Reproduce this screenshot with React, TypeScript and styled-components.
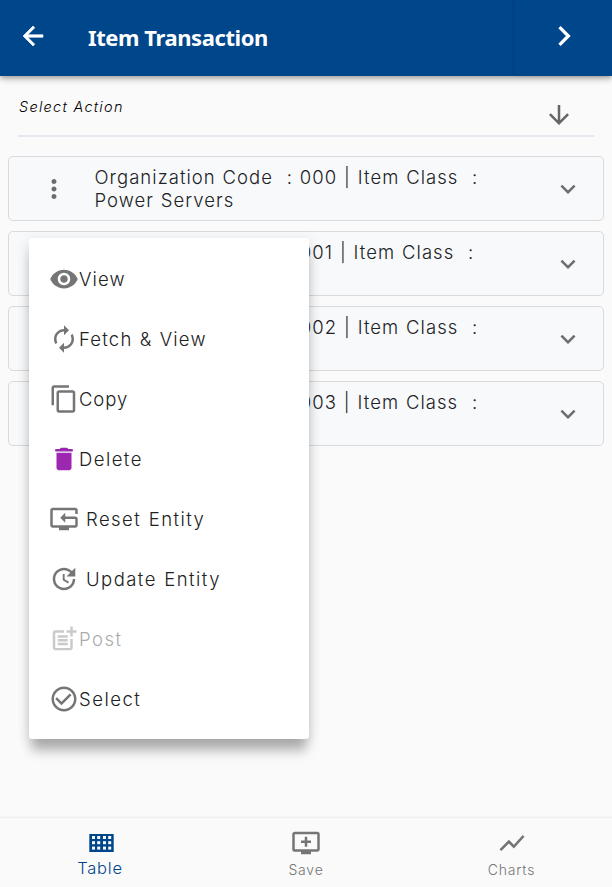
import React from "react";
import styled, { createGlobalStyle } from "styled-components";
import type { IconType } from "react-icons";
import {
  MdAddToQueue,
  MdArrowBack,
  MdArrowDownward,
  MdAutorenew,
  MdContentCopy,
  MdDelete,
  MdExpandMore,
  MdMoreVert,
  MdNavigateNext,
  MdPostAdd,
  MdResetTv,
  MdShowChart,
  MdVisibility,
} from "react-icons/md";

const GlobalStyle = createGlobalStyle`
  *, *::before, *::after { box-sizing: border-box; }
  body { margin: 0; background: #fafafa; }
  button { font: inherit; color: inherit; border: 0; background: none; padding: 0; }
`;

const Screen = styled.div`
  position: relative;
  display: flex;
  flex-direction: column;
  height: 887px;
  overflow: hidden;
  background: #fafafa;
  color: #212121;
  font-family: Inter, "Liberation Sans", sans-serif;
`;

const Header = styled.header`
  display: flex;
  flex: none;
  height: 76px;
  background: #00468b;
  color: #fff;
  box-shadow: 0 2px 4px -1px rgba(0, 0, 0, 0.2), 0 4px 5px rgba(0, 0, 0, 0.14),
    0 1px 10px rgba(0, 0, 0, 0.12);
`;

const BackButton = styled.button`
  display: flex;
  width: 88px;
  height: 72px;
  padding-left: 18px;
  align-items: center;
`;

const BackIcon = styled(MdArrowBack)`
  path:not([fill="none"]) {
    stroke: currentColor;
    stroke-width: 0.5px;
    stroke-linejoin: round;
  }
  path[fill="none"] { stroke: none; }
`;

const Title = styled.h1`
  flex: 1;
  margin: 0;
  font: 700 22px/74px "Noto Sans", "Open Sans", sans-serif;
  letter-spacing: -0.42px;
`;

const NextButton = styled.button`
  display: flex;
  width: 98px;
  height: 76px;
  padding: 0 0 4px 30px;
  align-items: center;
  border-radius: 4px;
  box-shadow: -1px 0 2px rgba(0, 0, 0, 0.14);
`;

const ActionBar = styled.div`
  display: flex;
  flex: none;
  justify-content: space-between;
  height: 61px;
  margin: 0 18px;
  padding: 0 20px 0 1px;
  border-bottom: 2px solid #e4e9ef;
`;

const ActionLabel = styled.span`
  padding-top: 21px;
  font-size: 14.5px;
  line-height: 20px;
  font-style: italic;
  font-weight: 300;
  letter-spacing: 1.27px;
  color: #000;
`;

const SortIcon = styled(MdArrowDownward)`
  margin-top: 24px;
  color: #666;
`;

const List = styled.main`
  display: flex;
  flex: 1;
  flex-direction: column;
  gap: 10px;
  padding: 19px 8px 0;
`;

const Card = styled.article`
  display: flex;
  align-items: center;
  height: 65px;
  padding: 0 20px 0 30px;
  border: 1px solid #d8dadd;
  border-radius: 5px;
  background: #f8f9fb;
  color: #6b6d70;
`;

const CardText = styled.p`
  flex: 1;
  align-self: flex-start;
  margin: 9px 0 0 25.5px;
  font-size: 18.5px;
  line-height: 23px;
  font-weight: 300;
  letter-spacing: 1.04px;
  word-spacing: 0.6px;
  white-space: pre-line;
  color: #212225;

  span { white-space: pre; }
`;

const Menu = styled.ul`
  position: absolute;
  top: 238px;
  left: 29px;
  width: 280px;
  height: 501px;
  margin: 0;
  padding: 11px 20px;
  list-style: none;
  background: #fff;
  border-radius: 3px;
  box-shadow: 0 15px 11px -3px rgba(0, 0, 0, 0.25), 0 4px 14px rgba(0, 0, 0, 0.14);
`;

const MenuItem = styled.li<{ $disabled?: boolean }>`
  display: flex;
  align-items: center;
  height: 60px;
  opacity: ${(p) => (p.$disabled ? 0.38 : 1)};
`;

const MenuIcon = styled.span<{ $color?: string }>`
  display: flex;
  color: ${(p) => p.$color ?? "#757575"};
`;

const MenuLabel = styled.span<{ $spacing: number; $indent?: boolean }>`
  padding-left: ${(p) => (p.$indent ? 7 : 0)}px;
  font-size: 18.5px;
  line-height: 30px;
  font-weight: 300;
  letter-spacing: ${(p) => p.$spacing}px;
  word-spacing: 0.8px;
  white-space: nowrap;
`;

const TabBar = styled.nav`
  display: grid;
  grid-template-columns: 200px 212px 199px;
  flex: none;
  height: 70px;
  border-top: 1px solid #f0f0f0;
  box-shadow: 0 -1px 1px rgba(0, 0, 0, 0.015);
`;

const Tab = styled.button<{ $active?: boolean }>`
  display: flex;
  flex-direction: column;
  align-items: center;
  padding-top: 10px;
  color: ${(p) => (p.$active ? "#00468b" : "#757575")};
`;

const TabLabel = styled.span<{ $active?: boolean }>`
  margin-top: ${(p) => (p.$active ? 0 : 2)}px;
  font-size: ${(p) => (p.$active ? 16.5 : 14)}px;
  line-height: 20px;
  font-weight: 300;
  letter-spacing: 0.8px;
`;

const iconProps = { viewBox: "0 0 24 24", width: 30, height: 30, fill: "currentColor" };

const UpdateIcon = () => (
  <svg {...iconProps}>
    <path d="M11 8v5l4.25 2.52.77-1.28-3.52-2.09V8zm10 2V3l-2.64 2.64C16.74 4.01 14.49 3 12 3c-4.97 0-9 4.03-9 9s4.03 9 9 9 9-4.03 9-9h-2c0 3.86-3.14 7-7 7s-7-3.14-7-7 3.14-7 7-7c1.93 0 3.68.79 4.95 2.05L14 10z" />
  </svg>
);

const SelectIcon = () => (
  <svg {...iconProps}>
    <path d="M16.59 7.58 10 14.17l-3.59-3.58L5 12l5 5 8-8zM12 2C6.48 2 2 6.48 2 12s4.48 10 10 10 10-4.48 10-10S17.52 2 12 2m0 18c-4.42 0-8-3.58-8-8s3.58-8 8-8 8 3.58 8 8-3.58 8-8 8" />
  </svg>
);

const TableIcon = () => (
  <svg width="30" height="30" viewBox="0 0 30 30">
    <path fill="currentColor" d="M4.3 6h24.4v18H4.3z" />
    {[8, 13.2, 18.6].map((y) =>
      [7, 12.2, 18, 23.2].map((x) => (
        <rect key={`${x}-${y}`} x={x} y={y} width="3" height="3" fill="#fafafa" />
      )),
    )}
  </svg>
);

interface Action {
  label: string;
  icon: IconType | (() => React.JSX.Element);
  spacing: number;
  color?: string;
  indent?: boolean;
  disabled?: boolean;
}

const actions: Action[] = [
  { label: "View", icon: MdVisibility, spacing: 1.1 },
  { label: "Fetch & View", icon: MdAutorenew, spacing: 1.2 },
  { label: "Copy", icon: MdContentCopy, spacing: 0.9 },
  { label: "Delete", icon: MdDelete, spacing: 1.45, color: "#9c27b0" },
  { label: "Reset Entity", icon: MdResetTv, spacing: 1.45, indent: true },
  { label: "Update Entity", icon: UpdateIcon, spacing: 1.45, indent: true },
  { label: "Post", icon: MdPostAdd, spacing: 1.5, disabled: true },
  { label: "Select", icon: SelectIcon, spacing: 1.5 },
];

const codes = ["000", "001", "002", "003"];

export default function App() {
  return (
    <>
      <GlobalStyle />
      <Screen>
        <Header>
          <BackButton aria-label="Back">
            <BackIcon size={30} />
          </BackButton>
          <Title>Item Transaction</Title>
          <NextButton aria-label="Next">
            <MdNavigateNext size={40} />
          </NextButton>
        </Header>
        <ActionBar>
          <ActionLabel>Select Action</ActionLabel>
          <SortIcon size={30} />
        </ActionBar>
        <List>
          {codes.map((code) => (
            <Card key={code}>
              <MdMoreVert size={30} />
              <CardText>
                <span>{`Organization Code  : ${code} | Item Class  :`}</span>
                {"\nPower Servers"}
              </CardText>
              <MdExpandMore size={30} />
            </Card>
          ))}
        </List>
        <TabBar>
          <Tab $active>
            <TableIcon />
            <TabLabel $active>Table</TabLabel>
          </Tab>
          <Tab>
            <MdAddToQueue size={30} />
            <TabLabel>Save</TabLabel>
          </Tab>
          <Tab>
            <MdShowChart size={30} />
            <TabLabel>Charts</TabLabel>
          </Tab>
        </TabBar>
        <Menu>
          {actions.map(({ label, icon: Icon, spacing, color, indent, disabled }) => (
            <MenuItem key={label} $disabled={disabled}>
              <MenuIcon $color={color}>
                <Icon size={30} />
              </MenuIcon>
              <MenuLabel $spacing={spacing} $indent={indent}>{label}</MenuLabel>
            </MenuItem>
          ))}
        </Menu>
      </Screen>
    </>
  );
}
